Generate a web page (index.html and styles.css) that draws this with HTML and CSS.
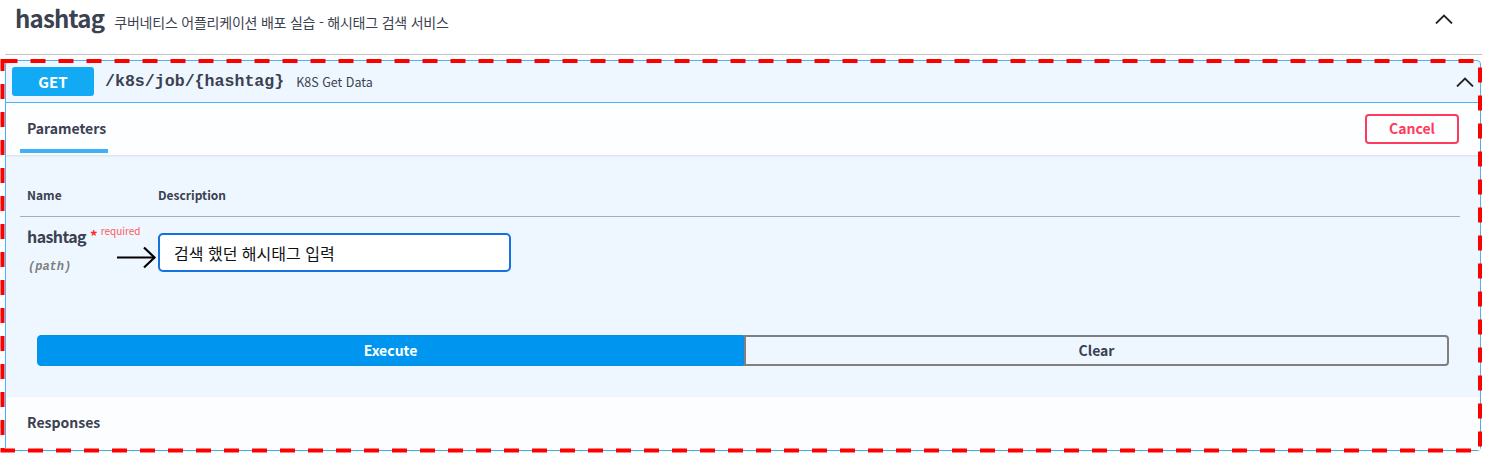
FILE: index.html
```html
<!DOCTYPE html>
<html lang="ko">
<head>
<meta charset="utf-8">
<title>hashtag</title>
<link rel="stylesheet" href="styles.css">
</head>
<body>
<div class="page">
  <div class="tag">
    <div class="tag-head">
      <span class="tag-title">hashtag</span>
      <span class="tag-desc">쿠버네티스 어플리케이션 배포 실습 - 해시태그 검색 서비스</span>
    </div>
    <svg class="chev tag-chev" width="18" height="10" viewBox="0 0 18 10"><polyline points="1,9.5 9,1.5 17,9.5" fill="none" stroke="#222" stroke-width="1.8"/></svg>
  </div>
  <div class="opblock">
    <div class="summary">
      <span class="method">GET</span>
      <span class="path">/k8s/job/{hashtag}</span>
      <span class="summary-desc">K8S Get Data</span>
      <svg class="chev sum-chev" width="18" height="10" viewBox="0 0 18 10"><polyline points="1,9.5 9,1.5 17,9.5" fill="none" stroke="#222" stroke-width="1.8"/></svg>
    </div>
    <div class="section-header">
      <div class="tab">Parameters</div>
      <button class="cancel">Cancel</button>
    </div>
    <div class="params-body">
      <div class="thead">
        <div class="col-name">Name</div>
        <div class="col-desc-head">Description</div>
      </div>
      <div class="param-row">
        <div class="col-name">
          <div class="pname">hashtag<span class="star">*</span><span class="req">required</span></div>
          <div class="ploc">(path)</div>
        </div>
        <div class="col-desc">
          <input class="pinput" type="text" value="검색 했던 해시태그 입력">
        </div>
        <svg class="arrow" width="40" height="24" viewBox="0 0 40 24"><line x1="0" y1="12.5" x2="37" y2="12.5" stroke="#000" stroke-width="2.2"/><polyline points="27,2.5 37.5,12.5 27,22.5" fill="none" stroke="#000" stroke-width="2.2"/></svg>
      </div>
      <div class="btn-group">
        <button class="execute">Execute</button>
        <button class="clear">Clear</button>
      </div>
    </div>
    <div class="responses-header">Responses</div>
  </div>
  <svg class="dash-overlay" width="1494" height="454" viewBox="0 0 1494 454"><rect x="2.5" y="61" width="1477.5" height="389.5" fill="none" stroke="#ff0000" stroke-width="4" stroke-dasharray="15 13"/></svg>
</div>
</body>
</html>
```
FILE: styles.css
```css
* { box-sizing: border-box; }
body {
  margin: 0;
  background: #ffffff;
  font-family: "Noto Sans CJK KR", "Noto Sans", sans-serif;
  color: #3b4151;
}
.page {
  position: relative;
  width: 1494px;
  height: 454px;
  overflow: hidden;
  padding: 0 12px 0 5px;
}
.tag {
  display: flex;
  align-items: flex-start;
  height: 55px;
  padding: 1px 0 0 10px;
  border-bottom: 1px solid #c2c4c8;
}
.tag-head {
  display: flex;
  align-items: baseline;
}
.tag-title {
  font-size: 24px;
  font-weight: 700;
  line-height: 33px;
  letter-spacing: -0.8px;
  color: #3b4151;
}
.tag-desc {
  margin-left: 10px;
  font-size: 14px;
  letter-spacing: -0.22px;
  color: #3b4151;
}
.chev { display: block; }
.tag-chev {
  margin-left: auto;
  margin-right: 29px;
  margin-top: 13px;
}
.opblock {
  margin-top: 5px;
  margin-right: 1px;
  border: 1px solid #4db5f7;
  border-radius: 4px;
  background: #eef7ff;
}
.summary {
  display: flex;
  align-items: center;
  height: 42px;
  padding: 0 6px;
  border-bottom: 1px solid #4db5f7;
}
.method {
  display: flex;
  align-items: center;
  justify-content: center;
  width: 82px;
  height: 29px;
  border-radius: 3px;
  background: #12a9f5;
  color: #ffffff;
  font-size: 15px;
  font-weight: 700;
}
.path {
  margin-left: 11px;
  font-family: "Liberation Mono", monospace;
  font-weight: 700;
  font-size: 16.6px;
  color: #3b4151;
}
.summary-desc {
  margin-left: 12px;
  font-size: 12.5px;
  color: #3b4151;
}
.sum-chev {
  margin-left: auto;
  margin-top: 1px;
}
.section-header {
  display: flex;
  align-items: center;
  height: 52px;
  padding: 0 21px 0 14px;
  background: rgba(255, 255, 255, 0.85);
  box-shadow: 0 1px 2px rgba(0, 0, 0, 0.1);
}
.tab {
  align-self: flex-start;
  width: 88px;
  height: 50px;
  padding: 3px 0 0 7px;
  display: flex;
  align-items: center;
  border-bottom: 4px solid #3fb2f5;
  font-size: 14px;
  font-weight: 700;
}
.cancel {
  margin-left: auto;
  width: 94px;
  height: 30px;
  border: 2px solid #ff3b5c;
  border-radius: 4px;
  background: transparent;
  color: #ff3b5c;
  font-family: "Noto Sans CJK KR", sans-serif;
  font-size: 14px;
  font-weight: 700;
  padding: 0 0 2px;
}
.params-body {
  height: 242px;
  padding: 0 20px 0 14px;
}
.thead {
  display: flex;
  height: 62px;
  padding-top: 31px;
  border-bottom: 1px solid #a9adb3;
  font-size: 12px;
  font-weight: 700;
  line-height: 17px;
}
.col-name {
  width: 138px;
  padding-left: 7px;
  flex: none;
}
.param-row {
  position: relative;
  display: flex;
  height: 118px;
}
.pname {
  padding-top: 9px;
  font-size: 16px;
  font-weight: 700;
  line-height: 20px;
  white-space: nowrap;
  letter-spacing: -0.6px;
}
.star {
  position: relative;
  top: -1px;
  margin-left: 4px;
  font-size: 15px;
  font-weight: 700;
  line-height: 0;
  letter-spacing: 0;
  color: #ff2b2b;
}
.req {
  position: relative;
  top: -8px;
  padding-left: 3px;
  font-size: 10px;
  font-weight: 400;
  line-height: 0;
  letter-spacing: 0;
  color: #ff5a5a;
}
.ploc {
  margin-top: 13px;
  padding-left: 1px;
  font-family: "Liberation Mono", monospace;
  font-size: 12px;
  font-style: italic;
  font-weight: 700;
  line-height: 17px;
  color: #808080;
}
.col-desc {
  padding-top: 16px;
}
.pinput {
  display: block;
  width: 353px;
  height: 39px;
  border: 2px solid #1570e0;
  border-radius: 5px;
  padding: 0 14px;
  background: #ffffff;
  color: #111111;
  font-family: "Noto Sans CJK KR", sans-serif;
  font-size: 16px;
  outline: none;
}
.arrow {
  position: absolute;
  left: 97px;
  top: 28px;
}
.btn-group {
  display: flex;
  height: 31px;
  margin: 0 11px 0 17px;
}
.execute {
  flex: 0 0 707px;
  border: 1px solid #078fe2;
  border-radius: 4px 0 0 4px;
  background: #0095ee;
  color: #ffffff;
  font-family: "Noto Sans CJK KR", sans-serif;
  font-size: 14px;
  font-weight: 700;
  padding: 0 0 2px;
}
.clear {
  flex: 1;
  border: 2px solid #808080;
  border-radius: 0 4px 4px 0;
  background: transparent;
  color: #3b4151;
  font-family: "Noto Sans CJK KR", sans-serif;
  font-size: 14px;
  font-weight: 700;
  padding: 0 0 2px;
}
.responses-header {
  display: flex;
  align-items: center;
  height: 53px;
  padding-left: 21px;
  padding-bottom: 3px;
  background: #fcfdff;
  box-shadow: 0 1px 2px rgba(0, 0, 0, 0.1);
  font-size: 14px;
  font-weight: 700;
}
.dash-overlay {
  position: absolute;
  left: 0;
  top: 0;
  pointer-events: none;
}
```
